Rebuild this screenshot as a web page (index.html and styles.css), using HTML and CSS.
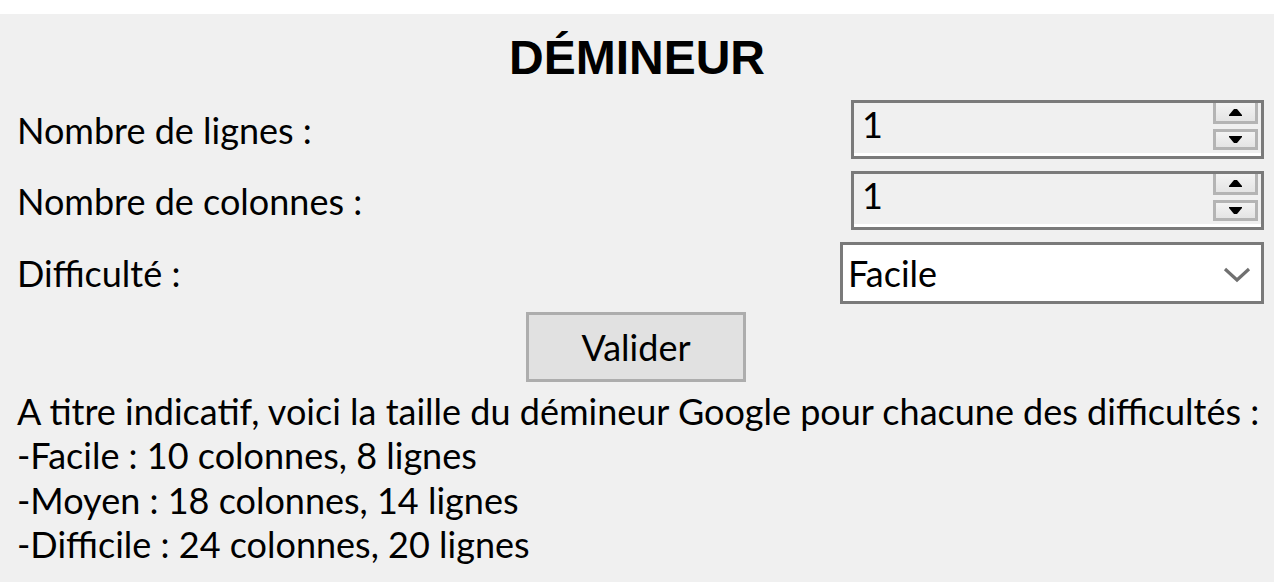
FILE: index.html
```html
<!DOCTYPE html>
<html lang="fr">
<head>
<meta charset="utf-8">
<title>Démineur</title>
<link rel="stylesheet" href="styles.css">
</head>
<body>
<div class="topband"></div>
<main class="form">
  <h1 class="title">DÉMINEUR</h1>
  <div class="rows">
    <div class="row">
      <label class="label">Nombre de lignes :</label>
      <div class="spin">
        <span class="spin-value">1</span>
        <div class="spin-buttons">
          <span class="spin-btn spin-up"><svg width="13" height="7" viewBox="0 0 13 7"><polygon points="5,0 8,0 13,6 13,7 0,7 0,6" fill="#000"/></svg></span>
          <span class="spin-btn spin-down"><svg width="13" height="7" viewBox="0 0 13 7"><polygon points="0,0 13,0 13,1 8,7 5,7 0,1" fill="#000"/></svg></span>
        </div>
      </div>
    </div>
    <div class="row">
      <label class="label">Nombre de colonnes :</label>
      <div class="spin">
        <span class="spin-value">1</span>
        <div class="spin-buttons">
          <span class="spin-btn spin-up"><svg width="13" height="7" viewBox="0 0 13 7"><polygon points="5,0 8,0 13,6 13,7 0,7 0,6" fill="#000"/></svg></span>
          <span class="spin-btn spin-down"><svg width="13" height="7" viewBox="0 0 13 7"><polygon points="0,0 13,0 13,1 8,7 5,7 0,1" fill="#000"/></svg></span>
        </div>
      </div>
    </div>
    <div class="row row-combo">
      <label class="label">Difficulté :</label>
      <div class="combo">
        <span class="combo-value">Facile</span>
        <svg class="chevron" width="28" height="16" viewBox="0 0 28 16"><polyline points="2,2 14,13 26,2" fill="none" stroke="#707070" stroke-width="3.2"/></svg>
      </div>
    </div>
  </div>
  <div class="actions">
    <button class="btn" type="button">Valider</button>
  </div>
  <div class="info">
    <p>A titre indicatif, voici la taille du démineur Google pour chacune des difficultés :</p>
    <p>-Facile : 10 colonnes, 8 lignes</p>
    <p>-Moyen : 18 colonnes, 14 lignes</p>
    <p>-Difficile : 24 colonnes, 20 lignes</p>
  </div>
</main>
</body>
</html>
```
FILE: styles.css
```css
html, body {
  margin: 0;
  padding: 0;
  background: #f0f0f0;
}
body {
  font-family: "Lato", "Noto Sans", sans-serif;
  font-size: 36px;
  color: #000;
  width: 1274px;
  height: 582px;
  overflow: hidden;
}
.topband {
  height: 14px;
  background: #fff;
}
.form {
  display: flex;
  flex-direction: column;
}
.title {
  margin: 20px 0 0;
  font-family: "Liberation Sans", Arial, sans-serif;
  font-weight: bold;
  font-size: 48px;
  line-height: 48px;
  text-align: center;
  height: 48px;
}
.rows {
  display: flex;
  flex-direction: column;
  gap: 12px;
  margin-top: 18px;
  padding: 0 10px 0 17px;
}
.row {
  display: flex;
  align-items: center;
  justify-content: space-between;
  height: 59px;
}
.row-combo {
  height: 62px;
}
.label {
  line-height: 44px;
}
.spin {
  box-sizing: border-box;
  width: 413px;
  height: 59px;
  border: 3px solid #7a7a7a;
  background: #f0f0f0;
  box-shadow: inset 0 -3px 0 #fff;
  display: flex;
  justify-content: space-between;
  align-items: flex-start;
  padding: 0 3px 0 8px;
}
.spin-value {
  line-height: 42px;
}
.spin-buttons {
  display: flex;
  flex-direction: column;
  gap: 5px;
}
.spin-btn {
  box-sizing: border-box;
  width: 45px;
  height: 21px;
  display: flex;
  align-items: center;
  justify-content: center;
  border: 3px solid #b4b4b4;
  background: linear-gradient(#f3f3f3, #e4e4e4);
}
.spin-up {
  border-top: 0;
  padding-top: 1px;
}
.spin-down {
  height: 21px;
}
.combo {
  box-sizing: border-box;
  width: 424px;
  height: 62px;
  border: 3px solid #7a7a7a;
  background: #fff;
  display: flex;
  align-items: center;
  justify-content: space-between;
  padding: 0 10px 0 5px;
}
.combo-value {
  line-height: 44px;
}
.chevron {
  display: block;
  margin-top: 3px;
}
.actions {
  display: flex;
  justify-content: center;
  margin-top: 8px;
  padding-right: 2px;
}
.btn {
  box-sizing: border-box;
  width: 220px;
  height: 70px;
  border: 3px solid #adadad;
  background: #e1e1e1;
  font-family: "Lato", "Noto Sans", sans-serif;
  font-size: 36px;
  line-height: 44px;
  color: #000;
  padding: 0;
}
.info {
  margin-top: 7px;
  padding-left: 17px;
}
.info p {
  margin: 0;
  line-height: 44.3px;
}
```
